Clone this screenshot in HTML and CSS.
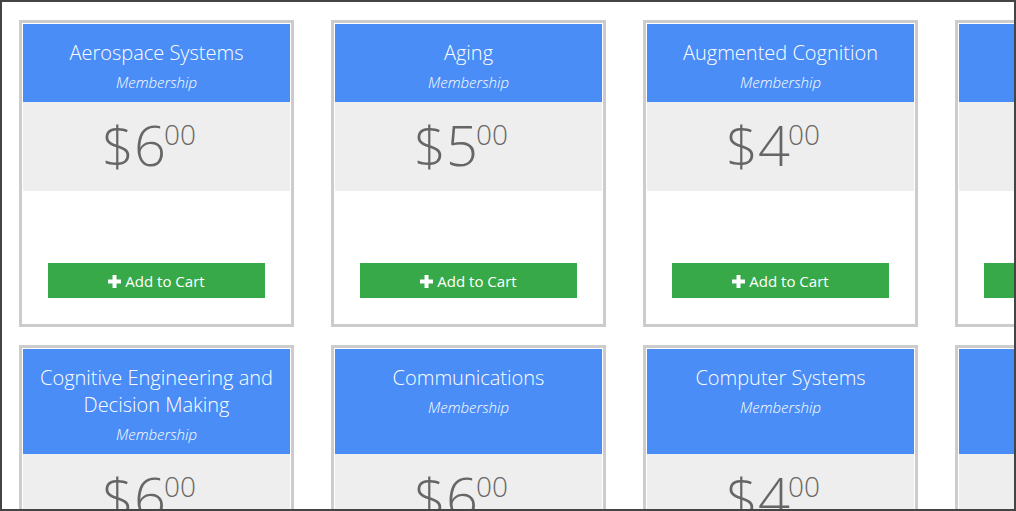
FILE: index.html
```html
<!DOCTYPE html>
<html>
<head>
    <meta charset="UTF-8">
    <meta name="viewport" content="width=device-width, initial-scale=1.0">
    <title>Memberships</title>
    <link rel="stylesheet" href="styles.css">
</head>
<body>
    <div class="frame">
        <div class="products">

            <div class="card">
                <div class="card-head">
                    <h3>Aerospace Systems</h3>
                    <div class="kind">Membership</div>
                </div>
                <div class="price">$6<sup>00</sup></div>
                <div class="card-body">
                    <button class="add-btn"><svg width="13" height="13" viewBox="0 0 13 13"><rect x="0" y="4.5" width="13" height="4" fill="#fff"/><rect x="4.5" y="0" width="4" height="13" fill="#fff"/></svg>Add to Cart</button>
                </div>
            </div>

            <div class="card">
                <div class="card-head">
                    <h3>Aging</h3>
                    <div class="kind">Membership</div>
                </div>
                <div class="price">$5<sup>00</sup></div>
                <div class="card-body">
                    <button class="add-btn"><svg width="13" height="13" viewBox="0 0 13 13"><rect x="0" y="4.5" width="13" height="4" fill="#fff"/><rect x="4.5" y="0" width="4" height="13" fill="#fff"/></svg>Add to Cart</button>
                </div>
            </div>

            <div class="card">
                <div class="card-head">
                    <h3>Augmented Cognition</h3>
                    <div class="kind">Membership</div>
                </div>
                <div class="price">$4<sup>00</sup></div>
                <div class="card-body">
                    <button class="add-btn"><svg width="13" height="13" viewBox="0 0 13 13"><rect x="0" y="4.5" width="13" height="4" fill="#fff"/><rect x="4.5" y="0" width="4" height="13" fill="#fff"/></svg>Add to Cart</button>
                </div>
            </div>

            <div class="card">
                <div class="card-head">
                    <h3>Biomechanics</h3>
                    <div class="kind">Membership</div>
                </div>
                <div class="price">$5<sup>00</sup></div>
                <div class="card-body">
                    <button class="add-btn"><svg width="13" height="13" viewBox="0 0 13 13"><rect x="0" y="4.5" width="13" height="4" fill="#fff"/><rect x="4.5" y="0" width="4" height="13" fill="#fff"/></svg>Add to Cart</button>
                </div>
            </div>

            <div class="card">
                <div class="card-head">
                    <h3>Cognitive Engineering and Decision Making</h3>
                    <div class="kind">Membership</div>
                </div>
                <div class="price">$6<sup>00</sup></div>
                <div class="card-body">
                    <button class="add-btn"><svg width="13" height="13" viewBox="0 0 13 13"><rect x="0" y="4.5" width="13" height="4" fill="#fff"/><rect x="4.5" y="0" width="4" height="13" fill="#fff"/></svg>Add to Cart</button>
                </div>
            </div>

            <div class="card">
                <div class="card-head">
                    <h3>Communications</h3>
                    <div class="kind">Membership</div>
                </div>
                <div class="price">$6<sup>00</sup></div>
                <div class="card-body">
                    <button class="add-btn"><svg width="13" height="13" viewBox="0 0 13 13"><rect x="0" y="4.5" width="13" height="4" fill="#fff"/><rect x="4.5" y="0" width="4" height="13" fill="#fff"/></svg>Add to Cart</button>
                </div>
            </div>

            <div class="card">
                <div class="card-head">
                    <h3>Computer Systems</h3>
                    <div class="kind">Membership</div>
                </div>
                <div class="price">$4<sup>00</sup></div>
                <div class="card-body">
                    <button class="add-btn"><svg width="13" height="13" viewBox="0 0 13 13"><rect x="0" y="4.5" width="13" height="4" fill="#fff"/><rect x="4.5" y="0" width="4" height="13" fill="#fff"/></svg>Add to Cart</button>
                </div>
            </div>

            <div class="card">
                <div class="card-head">
                    <h3>Education</h3>
                    <div class="kind">Membership</div>
                </div>
                <div class="price">$5<sup>00</sup></div>
                <div class="card-body">
                    <button class="add-btn"><svg width="13" height="13" viewBox="0 0 13 13"><rect x="0" y="4.5" width="13" height="4" fill="#fff"/><rect x="4.5" y="0" width="4" height="13" fill="#fff"/></svg>Add to Cart</button>
                </div>
            </div>

        </div>
    </div>
</body>
</html>
```

FILE: styles.css
```css
body {
    margin: 0;
    font-family: "Open Sans", sans-serif;
    background-color: #fff;
}

.frame {
    height: 511px;
    box-sizing: border-box;
    border: 2px solid #444;
    padding: 18px 0 0 17px;
    overflow: hidden;
}

.products {
    display: grid;
    grid-template-columns: repeat(4, 275px);
    column-gap: 37px;
    row-gap: 18px;
}

/* header, price and body line up across a row */
.card {
    display: grid;
    grid-row: span 3;
    grid-template-rows: subgrid;
    row-gap: 0;
    border: 3px solid #ccc;
    padding: 1px;
    background-color: #fff;
}

.card-head {
    background-color: #4a8df7;
    color: #fff;
    text-align: center;
    padding: 15px 10px 10px;
}

.card-head h3 {
    margin: 0;
    font-size: 20px;
    font-weight: 300;
    line-height: 27px;
}

.kind {
    margin-top: 6px;
    font-size: 15px;
    font-style: italic;
    font-weight: 300;
    line-height: 20px;
}

.price {
    background-color: #eee;
    color: #666;
    text-align: center;
    font-size: 56px;
    font-weight: 300;
    line-height: 84px;
    padding: 0 15px 5px 0;
}

.price sup {
    font-size: 28px;
    vertical-align: 21px;
    line-height: 0;
    margin-left: -2px;
}

.card-body {
    padding: 72px 25px 25px;
}

.add-btn {
    display: flex;
    align-items: center;
    justify-content: center;
    gap: 4px;
    width: 100%;
    height: 35px;
    border: none;
    border-radius: 0;
    background-color: #37a949;
    color: #fff;
    font-family: "Open Sans", sans-serif;
    font-size: 15px;
    padding: 0;
    cursor: pointer;
}

.add-btn svg {
    margin-top: 1px;
}
```
